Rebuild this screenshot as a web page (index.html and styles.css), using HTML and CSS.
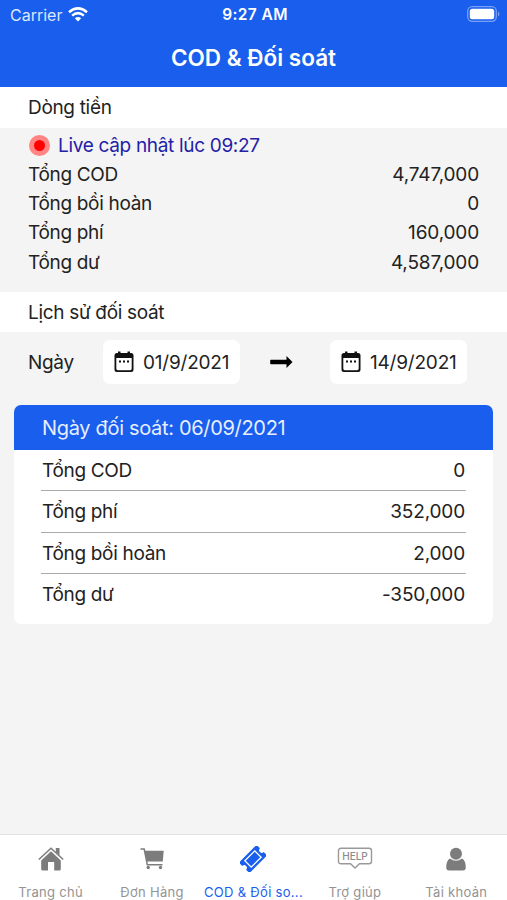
FILE: index.html
```html
<!DOCTYPE html>
<html lang="vi">
<head>
    <meta charset="UTF-8">
    <meta name="viewport" content="width=device-width, initial-scale=1.0">
    <title>COD &amp; Đối soát</title>
    <link rel="stylesheet" href="styles.css">
</head>
<body>
    <header>
        <div class="status-bar">
            <div class="carrier">
                <span>Carrier</span>
                <svg width="20" height="15" viewBox="0 0 20 15" fill="none" stroke="#fff" stroke-width="2.5">
                    <path d="M1 5.2Q10-2.4 19 5.2M4.1 8.6q5.9-4.9 11.8 0"/>
                    <path d="M6.8 11.2q3.2-2.5 6.4 0L10 14.5z" fill="#fff" stroke="none"/>
                </svg>
            </div>
            <span class="clock">9:27 AM</span>
            <svg class="battery" width="33" height="16" viewBox="0 0 33 16">
                <rect x="0.7" y="0.7" width="28.6" height="14.6" rx="4.5" fill="none" stroke="#7ba0f5" stroke-width="1.3"/>
                <rect x="2.8" y="2.8" width="24.4" height="10.4" rx="2.5" fill="#fff"/>
                <path d="M31 5.5q3 2.5 0 5z" fill="#7ba0f5"/>
            </svg>
        </div>
        <h1>COD &amp; Đối soát</h1>
    </header>

    <main>
        <h2>Dòng tiền</h2>
        <section class="summary">
            <div class="live"><i class="dot"></i><span>Live cập nhật lúc 09:27</span></div>
            <div class="row"><span>Tổng COD</span><span>4,747,000</span></div>
            <div class="row"><span>Tổng bồi hoàn</span><span>0</span></div>
            <div class="row"><span>Tổng phí</span><span>160,000</span></div>
            <div class="row"><span>Tổng dư</span><span>4,587,000</span></div>
        </section>

        <h2 class="history">Lịch sử đối soát</h2>
        <div class="filter">
            <span class="filter-label">Ngày</span>
            <button class="date" type="button">
                <svg width="20" height="22" viewBox="0 0 20 22">
                    <path d="M3 2h1V.5h2.500V2h7V.5H16V2h1q2.500 0 2.500 2.500v14Q19.500 21 17 21H3Q.5 21 .5 18.500v-14Q.5 2 3 2zM2.300 7v10.500q0 1.700 1.500 1.700h12.400q1.500 0 1.500-1.700V7z" fill-rule="evenodd"/>
                    <path d="M5 9.500h2v2H5zm4 0h2v2H9zm4 0h2v2h-2z"/>
                </svg>
                <span>01/9/2021</span>
            </button>
            <svg class="arrow" width="23" height="14" viewBox="0 0 23 14">
                <path d="M1 4.700h15.500V1L22.500 7l-6 6V9.300H1q-.8 0-.8-.8v-3q0-.8.8-.8z"/>
            </svg>
            <button class="date" type="button">
                <svg width="20" height="22" viewBox="0 0 20 22">
                    <path d="M3 2h1V.5h2.500V2h7V.5H16V2h1q2.500 0 2.500 2.500v14Q19.500 21 17 21H3Q.5 21 .5 18.500v-14Q.5 2 3 2zM2.300 7v10.500q0 1.700 1.500 1.700h12.400q1.500 0 1.500-1.700V7z" fill-rule="evenodd"/>
                    <path d="M5 9.500h2v2H5zm4 0h2v2H9zm4 0h2v2h-2z"/>
                </svg>
                <span>14/9/2021</span>
            </button>
        </div>

        <section class="card">
            <h3>Ngày đối soát: 06/09/2021</h3>
            <div class="card-body">
                <div class="row"><span>Tổng COD</span><span>0</span></div>
                <div class="row"><span>Tổng phí</span><span>352,000</span></div>
                <div class="row"><span>Tổng bồi hoàn</span><span>2,000</span></div>
                <div class="row"><span>Tổng dư</span><span>-350,000</span></div>
            </div>
        </section>
    </main>

    <nav class="tabs">
        <a class="tab">
            <svg width="26" height="26" viewBox="0 0 26 26">
                <path d="M13 5.300l9.800 9.200V23q0 1.500-1.500 1.500H16.200V16H10v8.500H4.700Q3.200 24.500 3.200 23v-8.500z"/>
                <path d="M.8 13.500L13 2.200l12.200 11.300" fill="none" stroke="currentColor" stroke-width="1.500"/>
                <path d="M17.800 2H21.500v7.500L17.800 6z"/>
            </svg>
            <span>Trang chủ</span>
        </a>
        <a class="tab">
            <svg width="26" height="26" viewBox="0 0 26 26">
                <path d="M5.500 4.800h19.200L23.800 15.500H8z"/>
                <path d="M1.500 3h3.700L8.300 18.800h15.200" fill="none" stroke="currentColor" stroke-width="1.500"/>
                <circle cx="9.200" cy="21.500" r="1.700"/>
                <circle cx="21.500" cy="21.500" r="1.700"/>
            </svg>
            <span>Đơn Hàng</span>
        </a>
        <a class="tab active">
            <svg width="26" height="26" viewBox="0 0 26 26">
                <g transform="rotate(-45 13 13)">
                    <path d="M1.500 5.500h23q1 0 1 1v3.800a2.700 2.700 0 0 0 0 5.400v3.800q0 1-1 1h-23q-1 0-1-1v-3.800a2.700 2.700 0 0 0 0-5.400V6.500q0-1 1-1z"/>
                    <rect x="6" y="8.500" width="14" height="9" fill="none" stroke="#fff" stroke-width="1.300"/>
                </g>
            </svg>
            <span>COD &amp; Đối so...</span>
        </a>
        <a class="tab">
            <svg class="help" width="36" height="26" viewBox="0 0 36 26" fill="none" stroke="currentColor">
                <path d="M4 2.300h28q2.500 0 2.500 2.500v10.500q0 2.500-2.500 2.500H22.500L18 22l-4.500-4.200H4q-2.500 0-2.500-2.500V4.800Q1.500 2.300 4 2.300z" stroke-width="1.400"/>
                <text x="18" y="13.800">HELP</text>
            </svg>
            <span>Trợ giúp</span>
        </a>
        <a class="tab">
            <svg width="26" height="26" viewBox="0 0 26 26">
                <circle cx="13" cy="7.800" r="6"/>
                <path d="M7 12.500q6 4.500 12 0 3.800 2 3.800 9 0 3-3 3H6.200q-3 0-3-3 0-7 3.800-9z"/>
            </svg>
            <span>Tài khoản</span>
        </a>
    </nav>
</body>
</html>
```
FILE: styles.css
```css
* {
    box-sizing: border-box;
}
body {
    margin: 0;
    height: 900px;
    display: flex;
    flex-direction: column;
    background-color: #f4f4f4;
    color: #222;
    font-family: Inter, "Liberation Sans", sans-serif;
    font-size: 19px;
    overflow: hidden;
}
h1, h2, h3 {
    margin: 0;
    font-weight: 400;
}
header {
    height: 87px;
    background-color: #195eed;
    color: #fff;
}
main {
    flex: 1;
    letter-spacing: -0.32px;
}
.status-bar {
    display: grid;
    grid-template-columns: 1fr auto 1fr;
    align-items: center;
    height: 29px;
    padding: 0 7px 0 10px;
    font-size: 16px;
}
.carrier {
    display: flex;
    align-items: center;
    gap: 6px;
    color: #dce7ff;
}
.carrier svg,
.battery {
    margin-bottom: 1px;
}
.clock {
    font-size: 15.5px;
    font-weight: 600;
    letter-spacing: 0.4px;
}
.battery {
    justify-self: end;
}
h1 {
    font-size: 22.5px;
    font-weight: 600;
    line-height: 58px;
    text-align: center;
}
h2 {
    height: 41px;
    padding-left: 28px;
    background-color: #fff;
    font-size: 19px;
    line-height: 41px;
}
.history {
    height: 40px;
    line-height: 41px;
}
.summary {
    height: 164px;
    padding: 3px 28px 0;
}
.live {
    display: flex;
    align-items: center;
    gap: 8px;
    height: 29px;
    padding-left: 1px;
    color: #2320a8;
}
.dot {
    width: 21px;
    height: 21px;
    border: 5px solid #ff8585;
    border-radius: 50%;
    background-color: #f00;
}
.row {
    display: flex;
    justify-content: space-between;
    line-height: 29.2px;
}
.row span:last-child {
    letter-spacing: -0.15px;
}
.filter {
    display: flex;
    align-items: center;
    height: 60px;
    padding: 0 40px 0 28px;
}
.filter-label {
    width: 75px;
}
.date {
    display: flex;
    align-items: center;
    gap: 9px;
    width: 137px;
    height: 44px;
    padding: 0 0 0 11px;
    border: none;
    border-radius: 7px;
    background-color: #fff;
    color: #222;
    font: inherit;
    letter-spacing: -0.2px;
}
.date svg {
    fill: #111;
}
.arrow {
    margin: 0 auto 0 30px;
}
.card {
    margin: 13px 14px 0;
    border-radius: 7px;
    background-color: #fff;
    overflow: hidden;
}
h3 {
    height: 45px;
    padding-left: 28px;
    background-color: #195eed;
    color: #e6eeff;
    font-size: 20px;
    line-height: 46px;
}
.card-body {
    height: 174px;
    padding: 0 27px;
}
.card-body .row {
    height: 41.4px;
    padding: 0 1px;
    border-bottom: 1px solid #aaa;
    line-height: 41px;
}
.card-body .row:last-child {
    border-bottom: none;
}
.tabs {
    display: grid;
    grid-template-columns: repeat(5, 1fr);
    height: 66px;
    border-top: 1px solid #e2e2e2;
    background-color: #fff;
}
.tab {
    display: flex;
    flex-direction: column;
    align-items: center;
    padding-top: 11px;
    color: #939393;
    font-size: 13px;
    letter-spacing: 0.3px;
    white-space: nowrap;
}
.tab svg {
    margin-bottom: 12px;
    fill: #7c7c7c;
    color: #7c7c7c;
}
.tab.active,
.tab.active svg {
    color: #195eed;
    fill: #195eed;
}
.tab .help {
    fill: none;
    color: #999;
}
.help text {
    fill: #8c8c8c;
    stroke: none;
    font-size: 10px;
    font-weight: 500;
    letter-spacing: 0;
    text-anchor: middle;
}
```
